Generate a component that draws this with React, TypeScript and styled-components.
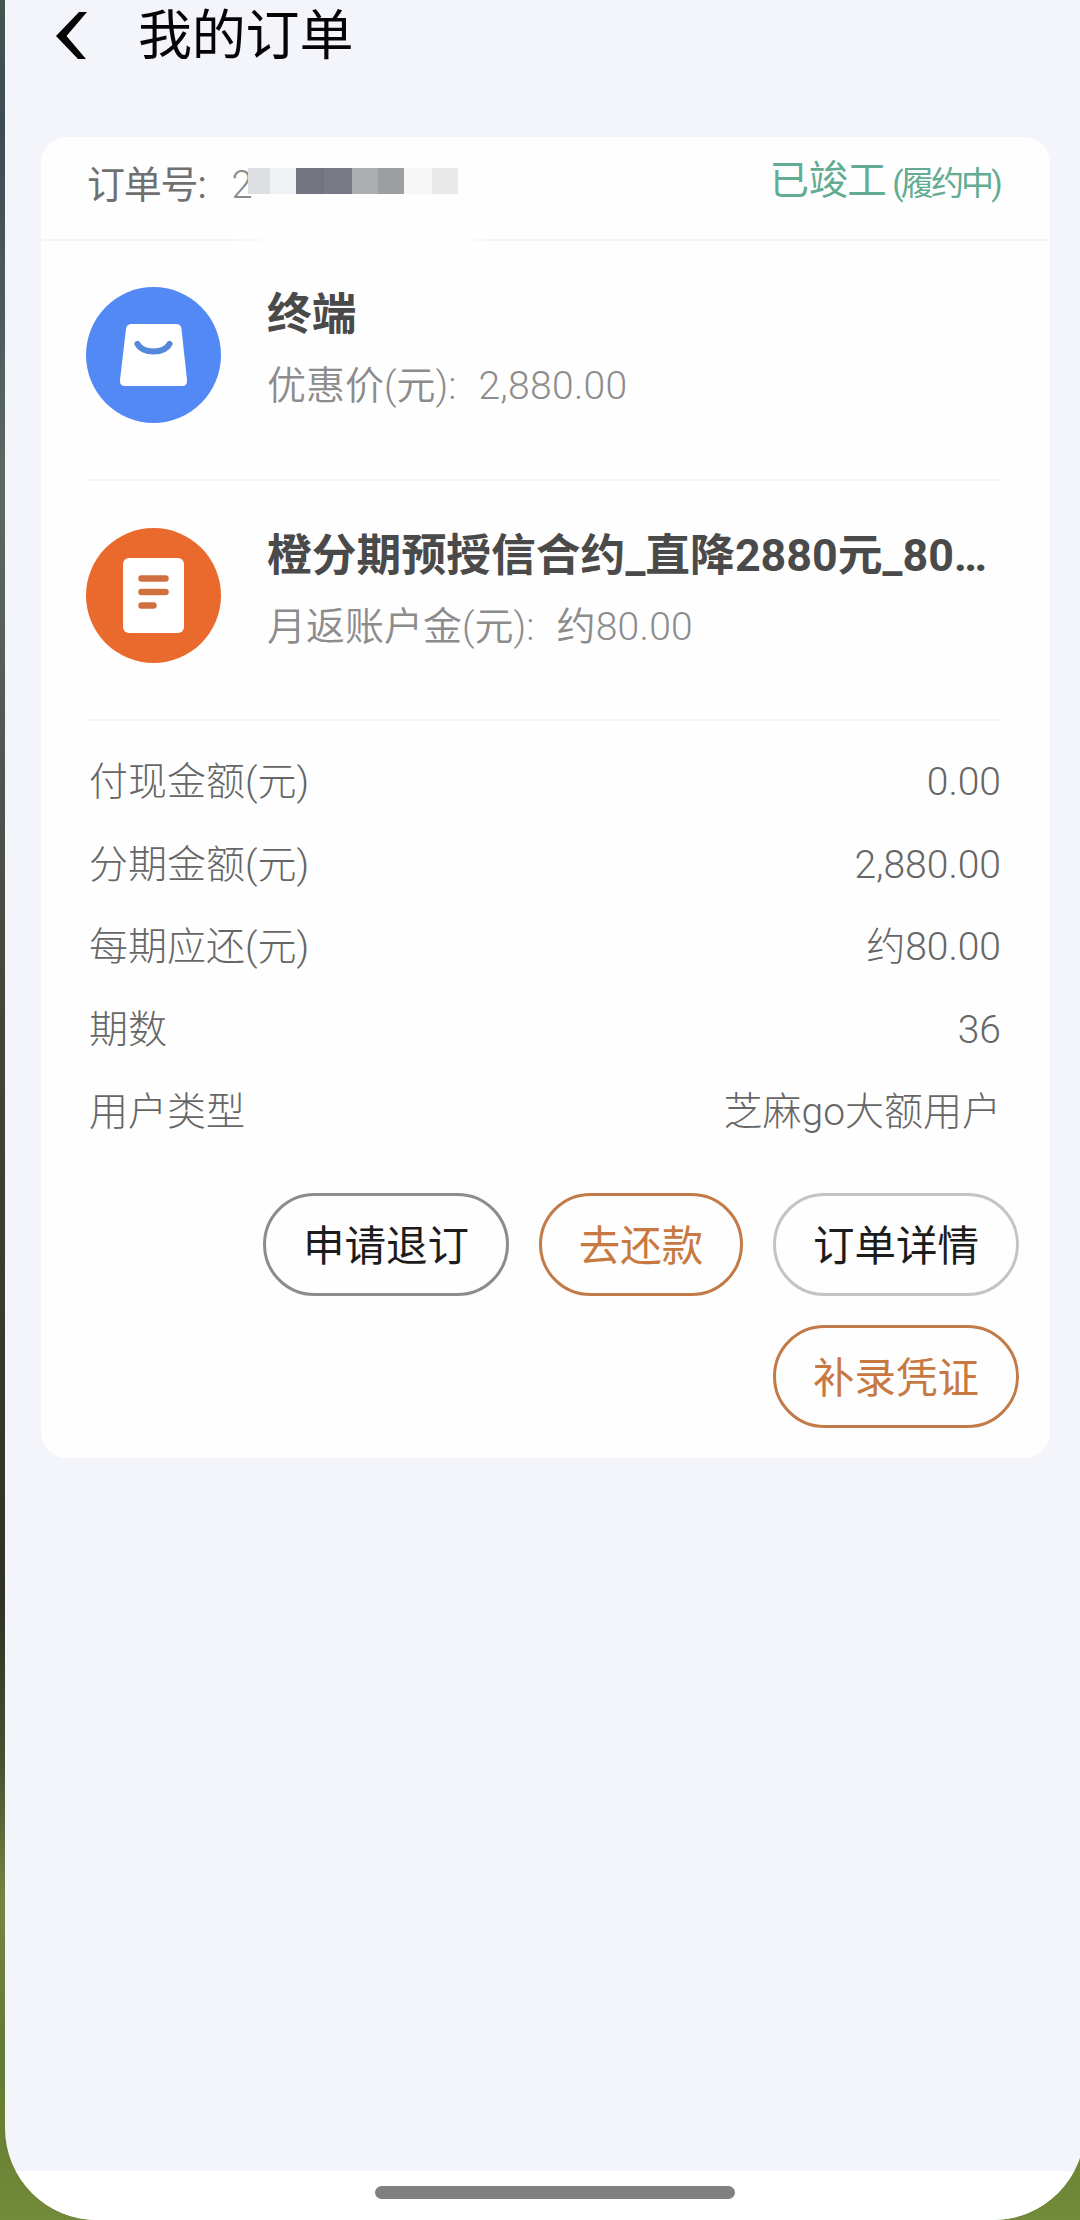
import React from "react";
import styled, { createGlobalStyle } from "styled-components";

const GlobalStyle = createGlobalStyle`
  * { box-sizing: border-box; }
  body {
    margin: 0;
    font-family: Roboto, "Noto Sans CJK SC", sans-serif;
    -webkit-font-smoothing: antialiased;
  }
`;

const Wallpaper = styled.div`
  width: 1080px;
  height: 2220px;
  overflow: hidden;
  padding-left: 5px;
  background: linear-gradient(
    180deg,
    #43564f 0,
    #3d4c55 130px,
    #5d6864 480px,
    #555a58 700px,
    #45463a 1000px,
    #38392c 1350px,
    #2f3226 1600px,
    #485030 1760px,
    #778443 1900px,
    #627a32 2060px,
    #738a3a 2220px
  );
`;

const Screen = styled.div`
  width: 1080px;
  height: 2220px;
  display: flex;
  flex-direction: column;
  background: #f4f5fa;
  border-radius: 0 0 92px 92px;
  overflow: hidden;
`;

const TopBar = styled.header`
  height: 137px;
  display: flex;
  align-items: flex-start;
  padding: 0 0 0 50px;
`;

const BackButton = styled.button`
  display: flex;
  align-items: flex-start;
  width: 83px;
  height: 70px;
  padding: 11px 0 0;
  border: 0;
  background: none;
`;

const PageTitle = styled.h1`
  margin: 0;
  padding-top: 2px;
  line-height: 70px;
  font-size: 54px;
  font-weight: 400;
  letter-spacing: -0.2px;
  color: #050505;
`;

const Card = styled.section`
  width: 1009px;
  height: 1321px;
  margin-left: 36px;
  border-radius: 26px;
  background: #fefefe;
`;

const OrderBar = styled.div`
  height: 104px;
  display: flex;
  justify-content: space-between;
  padding: 0 50px 0 46px;
  background: linear-gradient(90deg, #f5f5f6 190px, #fefefe 250px, #fefefe 415px, #f5f5f6 450px)
    bottom / 100% 2px no-repeat;
`;

const OrderNumber = styled.div`
  display: flex;
  height: 96px;
  line-height: 96px;
  font-size: 38px;
  letter-spacing: -1.2px;
  color: #707070;
`;

const FirstDigit = styled.span`
  width: 17px;
  margin-left: 26px;
  font-weight: 300;
  color: #8a8a8a;
`;

const Mosaic = styled.div`
  display: flex;
  margin-top: 31px;
  height: 26px;
`;

const MosaicCell = styled.i<{ $tone: string; $width: number }>`
  width: ${(p) => p.$width}px;
  background: ${(p) => p.$tone};
`;

const Status = styled.div`
  display: flex;
  height: 88px;
  line-height: 88px;
  color: #62ac92;
  font-size: 39.5px;
  letter-spacing: -0.6px;
`;

const StatusNote = styled.span`
  margin-left: 6px;
  padding-top: 3px;
  font-size: 33px;
  letter-spacing: -2.8px;
`;

const Item = styled.article<{ $top: number }>`
  height: 240px;
  margin: 0 47px 0 45px;
  padding-top: ${(p) => p.$top}px;
  display: flex;
  gap: 46px;
  border-bottom: 2px solid #f6f6f6;
`;

const ItemIcon = styled.div`
  width: 135px;
  height: 135px;
  flex: none;
`;

const ItemText = styled.div`
  flex: 1;
  min-width: 0;
`;

const ItemTitle = styled.h2`
  margin: 1px 0 0;
  height: 54px;
  line-height: 54px;
  font-size: 44.8px;
  font-weight: 700;
  color: #4a4a4a;
  white-space: nowrap;
`;

const ItemPrice = styled.p`
  margin: 17px 0 0;
  height: 54px;
  line-height: 54px;
  font-size: 39px;
  font-weight: 350;
  color: #8c8c8c;
  white-space: pre;
`;

const Amount = styled.span`
  margin-left: 3px;
  letter-spacing: 0.3px;
`;

const Details = styled.dl`
  margin: 0;
  padding: 20px 49px 0 48px;
`;

const DetailRow = styled.div`
  height: 82.5px;
  line-height: 82.5px;
  display: flex;
  justify-content: space-between;
  font-size: 39px;
  font-weight: 300;
  color: #666;
`;

const Term = styled.dt`
  margin: 0;
`;

const Value = styled.dd`
  margin: 0;
`;

const Actions = styled.div`
  display: flex;
  flex-wrap: wrap;
  justify-content: flex-end;
  gap: 29px 30px;
  padding: 39px 31px 0 0;
`;

const ActionButton = styled.button<{ $tone: string; $line: string; $width: number }>`
  width: ${(p) => p.$width}px;
  height: 103px;
  padding: 0 0 2px;
  border: 3px solid ${(p) => p.$line};
  border-radius: 52px;
  background: transparent;
  color: ${(p) => p.$tone};
  font-family: inherit;
  font-size: 41.5px;
`;

const Filler = styled.div`
  flex: 1;
`;

const NavArea = styled.footer`
  height: 49px;
  padding: 15px 0 0 370px;
  background: #fff;
`;

const HomePill = styled.div`
  width: 360px;
  height: 13px;
  border-radius: 7px;
  background: #808080;
`;

const mosaic: [string, number][] = [
  ["#dddee1", 22],
  ["#f1f2f3", 26],
  ["#73747f", 28],
  ["#787a86", 28],
  ["#adaeaf", 26],
  ["#9c9ea2", 26],
  ["#f7f7f8", 28],
  ["#e9e9ea", 26],
];

const details = [
  ["付现金额(元)", "0.00"],
  ["分期金额(元)", "2,880.00"],
  ["每期应还(元)", "约80.00"],
  ["期数", "36"],
  ["用户类型", "芝麻go大额用户"],
];

const actions = [
  { label: "申请退订", tone: "#1c1c1c", line: "#8c8c8c", width: 246 },
  { label: "去还款", tone: "#c87941", line: "#c27a48", width: 204 },
  { label: "订单详情", tone: "#1c1c1c", line: "#c4c4c4", width: 246 },
  { label: "补录凭证", tone: "#c87941", line: "#c27a48", width: 246 },
];

const BagIcon = () => (
  <svg width="135" height="136" viewBox="0 0 135 136">
    <ellipse cx="67.5" cy="68" rx="67.5" ry="68" fill="#5389f5" />
    <path
      d="M46 37H90Q95 37 95.500 42L101 93Q101.500 99 96 99H39Q33.500 99 34 93L40 42Q40.500 37 46 37Z"
      fill="#fff"
    />
    <path d="M51.500 57C57 67 78 67 83.500 57" fill="none" stroke="#5389d8" strokeWidth="6" strokeLinecap="round" />
  </svg>
);

const DocumentIcon = () => (
  <svg width="135" height="135" viewBox="0 0 135 135">
    <circle cx="67.5" cy="67.5" r="67.500" fill="#e96a2c" />
    <rect x="37" y="30" width="61" height="75" rx="6" fill="#fff" />
    <path d="M55.500 50.500H79.500M55.500 64H79.500M55.500 77.500H67.500" stroke="#cf7040" strokeWidth="6.500" strokeLinecap="round" />
  </svg>
);

export default function App() {
  return (
    <>
      <GlobalStyle />
      <Wallpaper>
        <Screen>
          <TopBar>
            <BackButton aria-label="返回">
              <svg width="34" height="49" viewBox="0 0 34 49">
                <path d="M24 1H32L11.500 25L31 48H23L1 25Z" fill="#050505" />
              </svg>
            </BackButton>
            <PageTitle>我的订单</PageTitle>
          </TopBar>

          <Card>
            <OrderBar>
              <OrderNumber>
                订单号:
                <FirstDigit>2</FirstDigit>
                <Mosaic>
                  {mosaic.map(([tone, width], i) => (
                    <MosaicCell key={i} $tone={tone} $width={width} />
                  ))}
                </Mosaic>
              </OrderNumber>
              <Status>
                已竣工
                <StatusNote>(履约中)</StatusNote>
              </Status>
            </OrderBar>

            <Item $top={46}>
              <ItemIcon>
                <BagIcon />
              </ItemIcon>
              <ItemText>
                <ItemTitle>终端</ItemTitle>
                <ItemPrice>
                  {"优惠价(元):  "}
                  <Amount>2,880.00</Amount>
                </ItemPrice>
              </ItemText>
            </Item>
            <Item $top={47}>
              <ItemIcon>
                <DocumentIcon />
              </ItemIcon>
              <ItemText>
                <ItemTitle>橙分期预授信合约_直降2880元_80…</ItemTitle>
                <ItemPrice>
                  {"月返账户金(元):  "}
                  <Amount>约80.00</Amount>
                </ItemPrice>
              </ItemText>
            </Item>

            <Details>
              {details.map(([term, value]) => (
                <DetailRow key={term}>
                  <Term>{term}</Term>
                  <Value>{value}</Value>
                </DetailRow>
              ))}
            </Details>

            <Actions>
              {actions.map((a) => (
                <ActionButton key={a.label} $tone={a.tone} $line={a.line} $width={a.width}>
                  {a.label}
                </ActionButton>
              ))}
            </Actions>
          </Card>

          <Filler />
          <NavArea>
            <HomePill />
          </NavArea>
        </Screen>
      </Wallpaper>
    </>
  );
}
